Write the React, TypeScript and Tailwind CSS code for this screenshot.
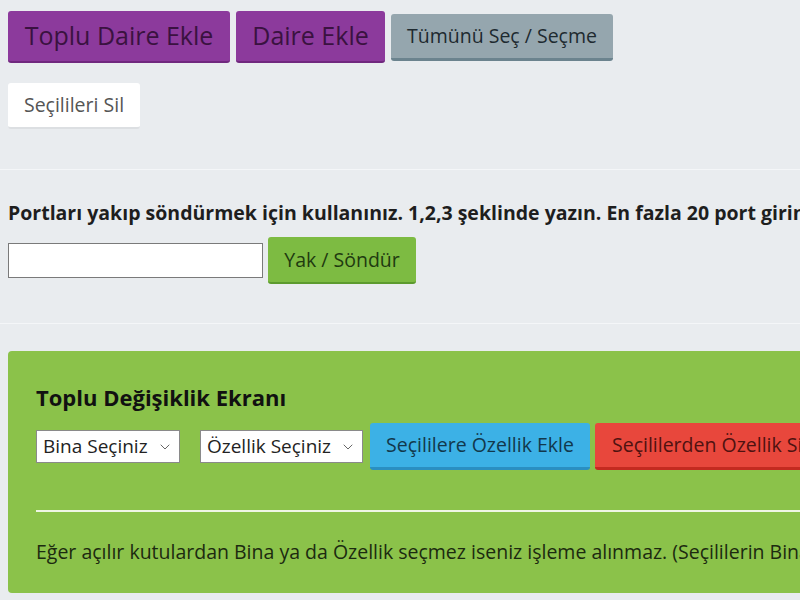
import { ChevronDown } from 'lucide-react'

const font = { fontFamily: '"Open Sans", "Noto Sans", sans-serif' }

function FakeSelect({ label, width }: { label: string; width: string }) {
  return (
    <div className={`shrink-0 flex items-center justify-between h-[33px] bg-white border border-[#8a8a8a] pl-[6px] pr-[6px] ${width}`}>
      <span className="text-[19px] text-[#222] leading-none">{label}</span>
      <ChevronDown className="w-[16px] h-[16px] text-[#666]" strokeWidth={1.5} />
    </div>
  )
}

export default function App() {
  return (
    <div style={font} className="w-[800px] h-[600px] overflow-hidden bg-[#e9ecef] pl-[8px]">
      {/* top actions */}
      <div className="flex items-center gap-[6px] pt-[11px]">
        <button className="h-[52px] w-[222px] rounded-[3px] bg-[#8c3a9c] border-b-2 border-[#70287e] text-[25px] text-[#3a1240]">
          Toplu Daire Ekle
        </button>
        <button className="h-[52px] w-[149px] rounded-[3px] bg-[#8c3a9c] border-b-2 border-[#70287e] text-[25px] text-[#3a1240]">
          Daire Ekle
        </button>
        <button className="h-[47px] w-[222px] rounded-[3px] bg-[#95a6ae] border-b-[3px] border-[#6b838e] text-[19.5px] text-[#1e2a30]">
          Tümünü Seç / Seçme
        </button>
      </div>

      <div className="mt-[20px]">
        <button className="h-[46px] w-[132px] rounded-[3px] bg-white border-b-2 border-[#dcdfe2] text-[19.5px] text-[#555]">
          Seçilileri Sil
        </button>
      </div>

      <div className="h-px bg-[#f4f6f8] mt-[40px] mr-[-8px] ml-[-8px]" />

      {/* ports */}
      <p className="mt-[29px] text-[19.5px] font-bold text-[#1e1e1e] whitespace-nowrap leading-[28px]">
        Portları yakıp söndürmek için kullanınız. 1,2,3 şeklinde yazın. En fazla 20 port girin.
      </p>
      <div className="flex items-center gap-[5px] mt-[10px]">
        <input className="h-[35px] w-[255px] bg-white border border-[#7a7a7a] outline-none" />
        <button className="h-[47px] w-[148px] rounded-[3px] bg-[#7dbb42] border-b-2 border-[#5c9a2e] text-[19.5px] text-[#1f3a10]">
          Yak / Söndür
        </button>
      </div>

      <div className="h-px bg-[#f4f6f8] mt-[39px] mr-[-8px] ml-[-8px]" />

      {/* bulk edit panel */}
      <div className="mt-[27px] w-[820px] h-[242px] rounded-[4px] bg-[#8bc24a] pl-[28px] pt-[33px]">
        <h2 className="text-[22px] font-bold text-[#111] leading-[26px]">Toplu Değişiklik Ekranı</h2>
        <div className="flex items-center mt-[13px]">
          <FakeSelect label="Bina Seçiniz" width="w-[144px]" />
          <div className="shrink-0 w-[20px]" />
          <FakeSelect label="Özellik Seçiniz" width="w-[163px]" />
          <div className="shrink-0 w-[7px]" />
          <button className="shrink-0 h-[47px] w-[220px] rounded-[3px] bg-[#3cb1e6] border-b-[3px] border-[#2a8fc2] text-[19.5px] text-[#12384c] whitespace-nowrap">
            Seçililere Özellik Ekle
          </button>
          <div className="shrink-0 w-[5px]" />
          <button className="shrink-0 h-[47px] w-[240px] rounded-[3px] bg-[#e8473c] border-b-[3px] border-[#c42a20] text-[19.5px] text-[#4f1210] whitespace-nowrap text-left pl-[17px]">
            Seçililerden Özellik Sil
          </button>
        </div>
        <div className="h-[2px] bg-[#eef6e4] mt-[40px]" />
        <p className="mt-[26px] text-[19.5px] text-[#1c2a10] whitespace-nowrap leading-[28px]">
          Eğer açılır kutulardan Bina ya da Özellik seçmez iseniz işleme alınmaz. (Seçililerin Bina ve Özellikleri değişir.)
        </p>
      </div>
    </div>
  )
}
